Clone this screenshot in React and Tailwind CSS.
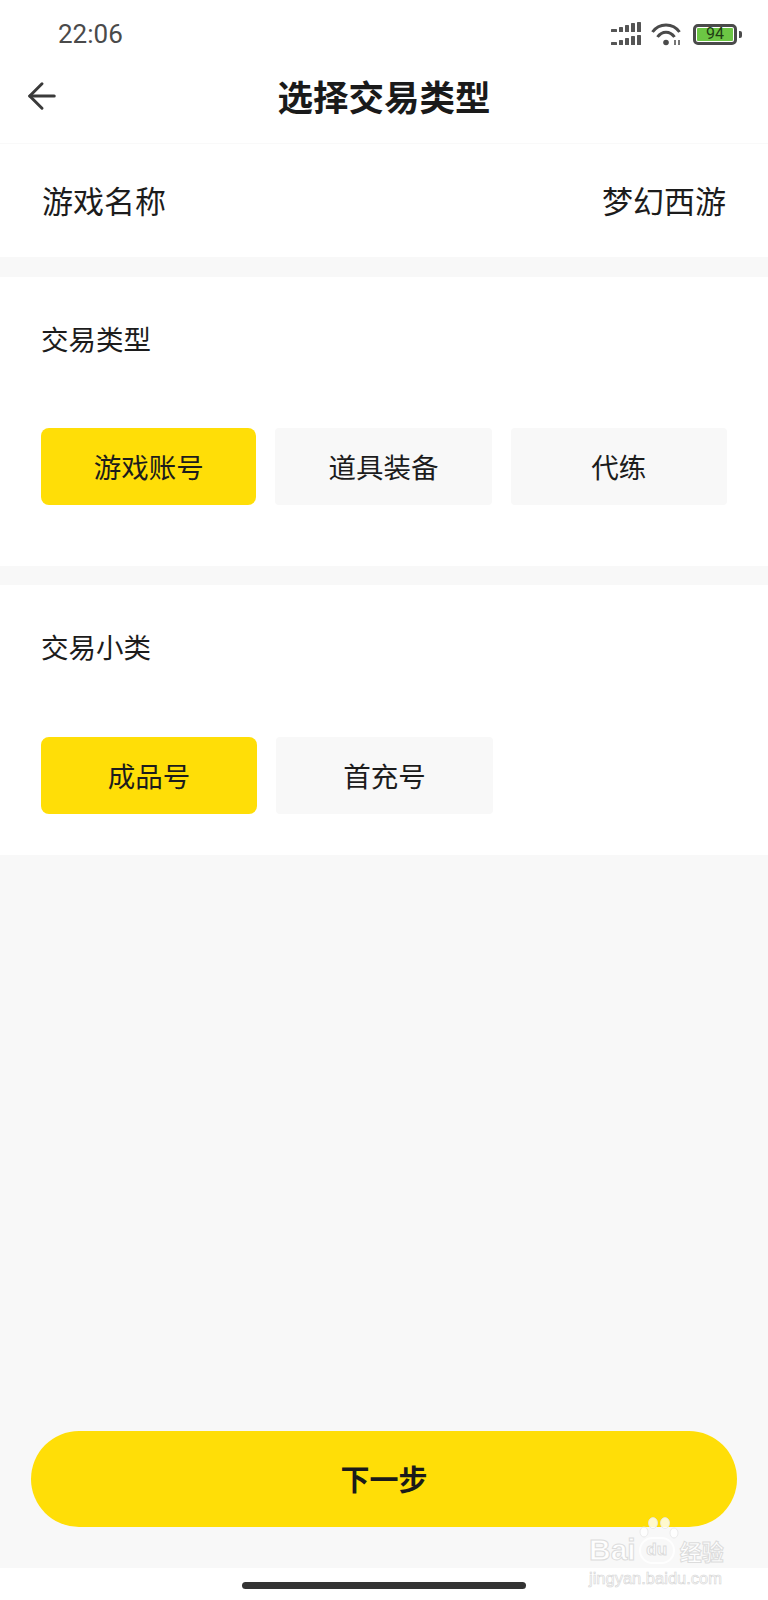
import { ArrowLeft } from 'lucide-react';

const cjk = { fontFamily: '"Noto Sans CJK SC", "Noto Sans", sans-serif' };

function SignalBars() {
    // two rows: a short dash, then four rising bars
    const bars = [
        { x: 0, w: 6, h: 3 },
        { x: 8, w: 4, h: 5 },
        { x: 14, w: 4, h: 7 },
        { x: 20, w: 4, h: 9 },
        { x: 26, w: 4, h: 10 },
    ];
    return (
        <svg width="30" height="24" viewBox="0 0 30 24" fill="#555555">
            {[10, 23].map(base => (
                <g key={base}>
                    {bars.map(b => (
                        <rect key={b.x} x={b.x} y={base - b.h} width={b.w} height={b.h} rx="0.6" />
                    ))}
                </g>
            ))}
        </svg>
    );
}

function WifiIcon() {
    return (
        <svg width="32" height="24" viewBox="0 0 32 24" fill="none" stroke="#4a4a4a" strokeWidth="3">
            <path d="M1.5 10 C8 0.5 22 0.5 28.5 10" />
            <path d="M6.5 15 C11 8.5 19 8.5 23.5 15" />
            <circle cx="15" cy="20.5" r="2.8" fill="#4a4a4a" stroke="none" />
            <path d="M24 18v5M28 18v5" strokeWidth="1.5" />
        </svg>
    );
}

function Battery() {
    return (
        <div className="flex items-center gap-[2px]">
            <div className="w-[44px] h-[21px] rounded-[5px] border-[3px] border-[#4a4a4a] p-[1px] flex">
                <div className="w-full bg-[#6cc644] rounded-[1px] flex items-center justify-center text-[16px] leading-none text-[#1f3d14]" style={{ fontFamily: 'Roboto, sans-serif' }}>94</div>
            </div>
            <div className="w-[3px] h-[7px] bg-[#4a4a4a] rounded-r-[2px]" />
        </div>
    );
}

function OptionButton({ label, active, width }) {
    return (
        <button className={`${width} h-[77px] pt-[1px] flex items-center justify-center text-[27.5px] text-[#1c1c1c] ${active ? 'bg-[#ffde07] rounded-lg' : 'bg-[#f8f8f8] rounded-sm'}`}>
            {label}
        </button>
    );
}

function Section({ title, options, height, titleHeight }) {
    return (
        <section className={`bg-white px-[41px] ${height}`}>
            <h2 className={`${titleHeight} pt-[41px] text-[27.5px] leading-[40px] text-[#1c1c1c] font-normal`}>{title}</h2>
            <div className="flex gap-[19px]">
                {options.map((o, i) => (
                    <OptionButton key={o} label={o} active={i === 0} width={i === 0 ? 'w-[216px]' : 'w-[217px]'} />
                ))}
            </div>
        </section>
    );
}

function Watermark() {
    const outline = 'text-white/90 [-webkit-text-stroke:1px_#dcdcdc]';
    return (
        <div className="absolute left-[589px] top-[1517px] w-[140px] flex flex-col items-center pointer-events-none">
            <svg width="42" height="24" viewBox="0 0 42 24" fill="#ffffff" fillOpacity="0.8" stroke="#e6e6e6" strokeWidth="0.8" className="mb-[-6px] z-10">
                <ellipse cx="15" cy="6" rx="4.5" ry="5.5" />
                <ellipse cx="27" cy="6" rx="4.5" ry="5.5" />
                <ellipse cx="6" cy="15" rx="4" ry="5" />
                <ellipse cx="36" cy="16" rx="4" ry="5" />
            </svg>
            <div className="flex items-center w-full" style={{ fontFamily: '"Liberation Sans", "Noto Sans CJK SC", sans-serif' }}>
                <span className={`text-[30px] leading-[30px] font-bold ${outline}`}>Bai</span>
                <span className={`ml-[3px] w-[36px] h-[27px] rounded-full border-2 border-white/90 flex items-center justify-center text-[17px] font-bold ${outline}`}>du</span>
                <span className={`ml-[5px] text-[22px] leading-[30px] font-bold ${outline}`} style={cjk}>经验</span>
            </div>
            <div className="mt-[3px] w-full text-[16.5px] leading-[20px] whitespace-nowrap text-white/90 [-webkit-text-stroke:0.6px_#d4d4d4]" style={{ fontFamily: '"Liberation Sans", sans-serif' }}>jingyan.baidu.com</div>
        </div>
    );
}

export default function App() {
    return (
        <div className="relative w-[768px] h-[1600px] bg-white flex flex-col text-[#1c1c1c]" style={cjk}>
            {/* Status bar */}
            <div className="h-[68px] flex items-center justify-between pl-[58px] pr-[26px]">
                <span className="text-[26px] text-[#4a4a4a]" style={{ fontFamily: 'Roboto, sans-serif' }}>22:06</span>
                <div className="flex items-center gap-[10px]">
                    <SignalBars />
                    <WifiIcon />
                    <Battery />
                </div>
            </div>

            {/* Title bar */}
            <header className="relative h-[76px] flex items-center justify-center border-b border-[#f9f9f9]">
                <ArrowLeft className="absolute left-[21px] top-[7px]" size={42} strokeWidth={3} color="#3a3a3a" absoluteStrokeWidth />
                <h1 className="text-[35.5px] font-bold text-[#1a1a1a] pb-[20px]">选择交易类型</h1>
            </header>

            {/* Game name */}
            <div className="h-[113px] flex items-center justify-between px-[42px] text-[31px]">
                <span>游戏名称</span>
                <span>梦幻西游</span>
            </div>
            <div className="h-[20px] bg-[#f8f8f8]" />

            <Section title="交易类型" options={['游戏账号', '道具装备', '代练']} height="h-[289px]" titleHeight="h-[151px]" />
            <div className="h-[19px] bg-[#f8f8f8]" />
            <Section title="交易小类" options={['成品号', '首充号']} height="h-[270px]" titleHeight="h-[152px]" />

            {/* Empty area + next button */}
            <div className="flex-1 bg-[#f8f8f8] flex flex-col justify-end px-[31px] pb-[41px]">
                <button className="h-[96px] w-full rounded-full bg-[#ffde07] text-[29px] font-bold text-[#1a1a1a]">下一步</button>
            </div>

            {/* Home indicator */}
            <div className="h-[32px] flex justify-center pt-[14px]">
                <div className="w-[284px] h-[7px] rounded-full bg-[#333333]" />
            </div>

            <Watermark />
        </div>
    );
}
